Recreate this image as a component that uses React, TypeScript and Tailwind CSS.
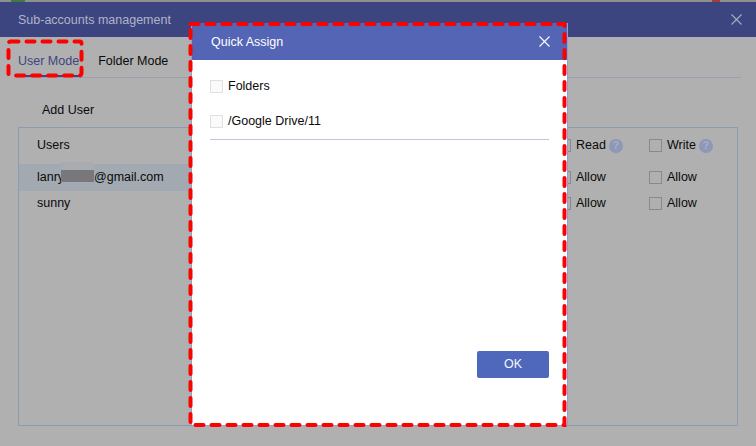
import React from 'react';

const Box = ({ className = '' }: { className?: string }) => (
  <span className={`block w-[13px] h-[13px] border shrink-0 ${className}`} />
);

const Help = () => (
  <span className="flex w-[14px] h-[14px] -ml-[2px] rounded-full bg-[#8d97b8] items-center justify-center text-[11px] font-bold text-[#a9aec2]">?</span>
);

const CloseIcon = ({ color }: { color: string }) => (
  <svg width="11" height="11" viewBox="0 0 11 11" stroke={color} strokeWidth="1.1" fill="none">
    <path d="M.5.5l10 10M10.5.5l-10 10" />
  </svg>
);

function PermCell({ label, help, className = '' }: { label: string; help?: boolean; className?: string }) {
  return (
    <div className={`flex items-center gap-[5px] pb-[1px] ${className}`}>
      <Box className="border-[#8a8a8a]" />
      <span>{label}</span>
      {help && <Help />}
    </div>
  );
}

function Row({ name, selected }: { name: React.ReactNode; selected?: boolean }) {
  return (
    <div className={`flex items-center ${selected ? 'h-[27px]' : 'h-[26px]'}`}>
      <div className={`w-[539px] h-full pl-[18px] pb-[1px] flex items-center ${selected ? 'bg-[#a2a9b1]' : ''}`}>
        <span>{name}</span>
      </div>
      <PermCell label="Allow" className="w-[91px]" />
      <PermCell label="Allow" />
    </div>
  );
}

export default function App() {
  return (
    <div
      className="relative w-[756px] h-[446px] overflow-hidden bg-[#b0b0b0] text-[#0a0a0a] text-[12.5px]"
      style={{ fontFamily: '"Liberation Sans", Arial, sans-serif' }}
    >
      <div className="relative h-[2px] bg-[#8f8f8f]">
        <div className="absolute left-[11px] top-0 w-[14px] h-[2px] bg-[#3f7a45]" />
        <div className="absolute left-[712px] top-0 w-[8px] h-[2px] bg-[#a33c3c]" />
      </div>
      <div className="h-[35px] bg-[#3c4580] flex items-center justify-between pl-[18px] pr-[14px] text-[#b1b4c8]">
        <span className="pt-[1px]">Sub-accounts management</span>
        <CloseIcon color="#a9adc2" />
      </div>

      <div className="mx-[15px] pl-[3px] h-[41px] border-b border-[#9aa0ad] flex items-end gap-[19px] leading-[17px]">
        <div className="h-[24px] text-[#3c4580] border-b-2 border-[#3c4580]">User Mode</div>
        <div className="h-[24px]">Folder Mode</div>
      </div>

      <div className="ml-[42px] mt-[23px] h-[18px] leading-[18px]">Add User</div>

      <div className="mx-[18px] mt-[8px] h-[299px] border border-[#8d9bb0]">
        <div className="h-[36px] flex items-center">
          <div className="w-[539px] pl-[18px] pb-[1px]">Users</div>
          <PermCell label="Read" help className="w-[91px]" />
          <PermCell label="Write" help />
        </div>
        <Row
          selected
          name={
            <>
              <span className="inline-block w-[57px]">lanry</span>@gmail.com
            </>
          }
        />
        <Row name="sunny" />
      </div>

      {/* blurred part of the email */}
      <div className="absolute left-[61px] top-[162px] w-[33px] h-[20px] bg-[#a8abb0]">
        <div className="mt-[8px] h-[12px] bg-[#78787c]" />
      </div>

      {/* Quick Assign dialog */}
      <div className="absolute left-[191px] top-[23px] w-[377px] h-[403px] bg-white border border-[#8f9fd8] border-t-0 flex flex-col">
        <div className="h-[37px] bg-[#5565b5] flex items-center justify-between pl-[19px] pr-[17px] text-white shrink-0">
          <span className="pt-[1px]">Quick Assign</span>
          <CloseIcon color="#ffffff" />
        </div>
        <div className="px-[18px] flex flex-col flex-1">
          <div className="h-[26px] mt-[13px] flex items-center gap-[5px]">
            <Box className="border-[#e0e0e0] bg-[#fafafa]" />
            <span className="pt-[1px]">Folders</span>
          </div>
          <div className="h-[26px] mt-[9px] flex items-center gap-[5px]">
            <Box className="border-[#e0e0e0] bg-[#fafafa]" />
            <span className="pt-[1px]">/Google Drive/11</span>
          </div>
          <div className="mt-[5px] border-t border-[#c0c6dc]" />
          <div className="flex justify-end mt-[211px]">
            <button className="w-[72px] h-[27px] bg-[#5068bb] text-[#f4f6ff] rounded-[2px]">OK</button>
          </div>
        </div>
      </div>

      {/* red annotation outlines */}
      <svg className="absolute inset-0 pointer-events-none" width="756" height="446" fill="none" stroke="#ff0000" strokeWidth="4" strokeLinecap="round" strokeDasharray="8 8">
        <rect x="8.5" y="41.5" width="73" height="34" rx="2" />
        <rect x="190.5" y="24" width="374" height="401" />
      </svg>
    </div>
  );
}
